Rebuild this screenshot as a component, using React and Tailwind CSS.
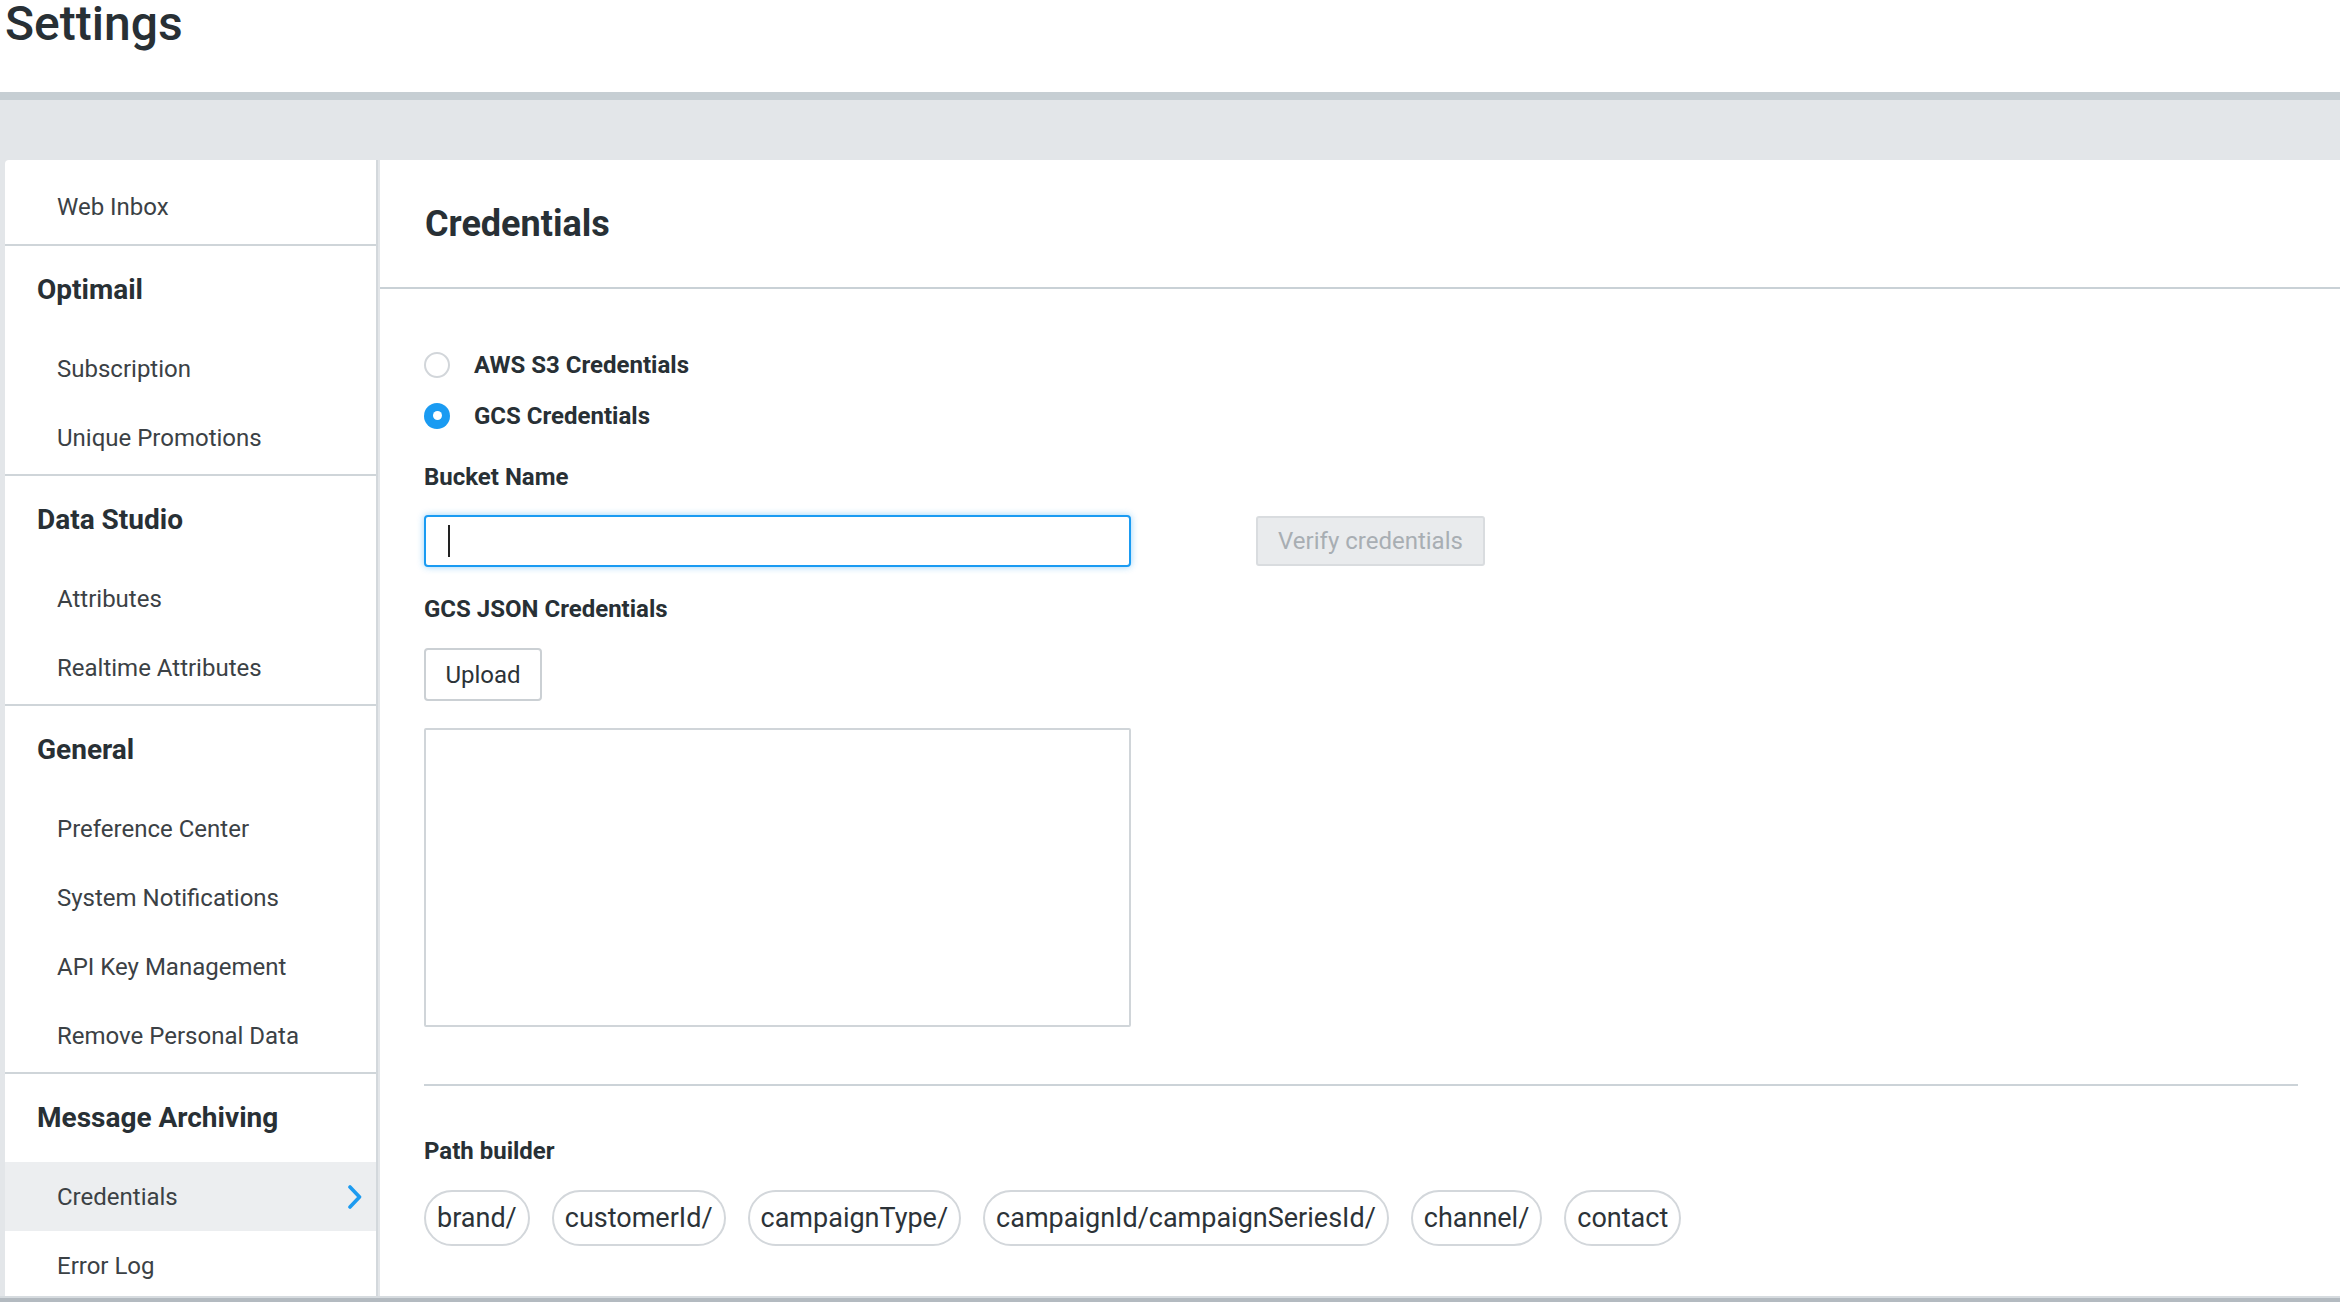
import React from "react";

const Sep = () => <div className="h-[2px] bg-[#cfd5d9]" />;

function Item({ label, active }) {
  return (
    <div
      className={
        "h-[69px] flex items-center justify-between pl-[52px] pr-[13px] text-[24px] text-[#3b4145] " +
        (active ? "bg-[#eceef0]" : "")
      }
    >
      <span>{label}</span>
      {active && (
        <svg width="16" height="24" viewBox="0 0 16 24">
          <polyline
            points="3,2 12.5,12 3,22"
            fill="none"
            stroke="#1d9bf0"
            strokeWidth="3.6"
            strokeLinecap="round"
            strokeLinejoin="round"
          />
        </svg>
      )}
    </div>
  );
}

function Section({ title, items, active }) {
  return (
    <div>
      <Sep />
      <div className="h-[88px] flex items-center pl-[32px] text-[28px] font-bold text-[#283035]">
        {title}
      </div>
      {items.map((it) => (
        <Item key={it} label={it} active={it === active} />
      ))}
      <div className="h-[2px]" />
    </div>
  );
}

function Radio({ checked, label }) {
  return (
    <div className="h-[51px] flex items-center">
      {checked ? (
        <div className="w-[26px] h-[26px] rounded-full bg-[#1a9bf2] flex items-center justify-center">
          <div className="w-[9px] h-[9px] rounded-full bg-white" />
        </div>
      ) : (
        <div className="w-[26px] h-[26px] rounded-full border-2 border-[#d2d6da] bg-white" />
      )}
      <span className="ml-[24px] text-[24px] font-bold text-[#283035]">{label}</span>
    </div>
  );
}

const Label = ({ children, className = "" }) => (
  <div className={"h-[36px] flex items-center text-[24px] font-bold text-[#283035] " + className}>
    {children}
  </div>
);

export default function App() {
  const chips = [
    "brand/",
    "customerId/",
    "campaignType/",
    "campaignId/campaignSeriesId/",
    "channel/",
    "contact",
  ];
  return (
    <div className="w-[2340px] h-[1302px] overflow-hidden flex flex-col bg-[#e3e6e9] font-['Roboto',sans-serif]">
      <header className="h-[92px] bg-white pl-[5px]">
        <h1 className="text-[48px] leading-[48px] font-medium text-[#283035]">Settings</h1>
      </header>
      <div className="h-[8px] bg-[#c6ced3]" />
      <div className="flex-1 flex pt-[60px] pl-[5px] min-h-0">
        <aside className="w-[373px] bg-white rounded-tl-[4px] border-r-2 border-[#d3d8dc] flex flex-col overflow-hidden">
          <div className="pt-[12px] pb-[3px]">
            <Item label="Web Inbox" />
          </div>
          <Section title="Optimail" items={["Subscription", "Unique Promotions"]} />
          <Section title="Data Studio" items={["Attributes", "Realtime Attributes"]} />
          <Section
            title="General"
            items={["Preference Center", "System Notifications", "API Key Management", "Remove Personal Data"]}
          />
          <Section title="Message Archiving" items={["Credentials", "Error Log"]} active="Credentials" />
        </aside>
        <main className="flex-1 ml-[2px] bg-white flex flex-col min-w-0">
          <div className="h-[129px] flex items-center pl-[45px] border-b-2 border-[#c9d1d6]">
            <h2 className="text-[36px] font-bold text-[#283035]">Credentials</h2>
          </div>
          <div className="pl-[44px] pr-[42px] pt-[50px]">
            <Radio label="AWS S3 Credentials" />
            <Radio label="GCS Credentials" checked />
            <Label className="mt-[18px]">Bucket Name</Label>
            <div className="mt-[20px] flex items-center">
              <div className="w-[707px] h-[52px] rounded-[4px] border-2 border-[#1a9bf2] shadow-[0_0_7px_rgba(26,155,242,0.45)] bg-white flex items-center pl-[22px]">
                <div className="w-[2px] h-[32px] bg-[#222]" />
              </div>
              <button className="ml-[125px] w-[229px] h-[50px] rounded-[3px] border-2 border-[#d9dcdf] bg-[#e9ebed] text-[24px] text-[#a8aeb3]">
                Verify credentials
              </button>
            </div>
            <Label className="mt-[24px]">GCS JSON Credentials</Label>
            <button className="mt-[21px] w-[118px] h-[53px] rounded-[4px] border-2 border-[#cbd0d4] bg-white text-[24px] text-[#2c3338]">
              Upload
            </button>
            <div className="mt-[27px] w-[707px] h-[299px] border-2 border-[#d0d5d9] rounded-[2px] bg-white" />
            <div className="mt-[57px] h-[2px] bg-[#ccd3d8]" />
            <Label className="mt-[47px]">Path builder</Label>
            <div className="mt-[21px] flex gap-[22px]">
              {chips.map((c) => (
                <div
                  key={c}
                  className="h-[56px] px-[11px] rounded-full border-2 border-[#d3d7db] flex items-center text-[27px] text-[#2c3338]"
                >
                  {c}
                </div>
              ))}
            </div>
          </div>
        </main>
      </div>
      <div className="h-[2px] bg-[#d6dbdf]" />
      <div className="h-[4px] bg-[#b3bac0]" />
    </div>
  );
}
